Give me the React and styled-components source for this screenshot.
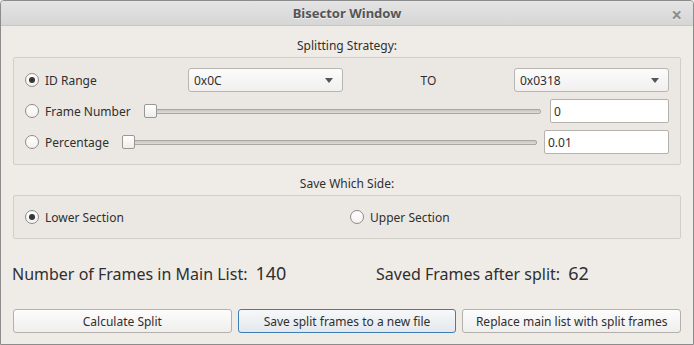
import styled, { createGlobalStyle } from "styled-components";

const Global = createGlobalStyle`
  html, body { margin: 0; padding: 0; background: #efece8; }
  body { font-family: "Noto Sans", "DejaVu Sans", sans-serif; color: #2f2f2f; }
`;

const Window = styled.div`
  width: 694px; height: 345px; box-sizing: border-box;
  border: 1px solid #8c8c8c; border-radius: 4px 4px 0 0;
  background: #efece8; overflow: hidden;
  display: flex; flex-direction: column;
`;

const TitleBar = styled.div`
  height: 24px; flex: none; position: relative;
  background: linear-gradient(#e4e4e4, #d6d6d6);
  border-bottom: 1px solid #c9c6c2;
  display: flex; align-items: center; justify-content: center;
  font-weight: bold; font-size: 13px; color: #555;
  text-shadow: 0 1px 0 rgba(255,255,255,.6);
`;

const Close = styled.span`
  position: absolute; right: 11px; top: 1px;
  font-size: 19px; font-weight: bold; color: #8e8e8e;
`;

const Content = styled.div`
  display: flex; flex-direction: column; padding: 0 11px;
`;

const Caption = styled.div`
  text-align: center; font-size: 12px; line-height: 18px;
  margin-top: ${p => p.$top}px;
`;

const Group = styled.div`
  margin: 2px 1px 0; border: 1px solid #d2cec9; border-radius: 2px;
  background: #ebe8e4;
  padding: ${p => p.$pad};
  height: ${p => p.$h}px; box-sizing: border-box;
`;

const Stack = styled(Group)`
  display: flex; flex-direction: column; gap: 7px;
`;

const Pair = styled(Group)`
  display: grid; grid-template-columns: 325px 1fr; align-items: center;
`;

const Row = styled.div`
  display: flex; align-items: center; height: 24px;
`;

const RadioWrap = styled.label`
  display: flex; align-items: center; gap: 6px; font-size: 12px;
  width: ${p => (p.$w ? p.$w + "px" : "auto")}; flex: none;
`;

const Circle = styled.span`
  width: 12px; height: 12px; border-radius: 50%;
  border: 1px solid #8f8b87; background: linear-gradient(#ffffff, #f3f2f1);
  display: flex; align-items: center; justify-content: center;
  &::after {
    content: ""; width: 6px; height: 6px; border-radius: 50%;
    background: #363636; display: ${p => (p.$on ? "block" : "none")};
  }
`;

function Radio({ on, children, w }) {
  return (
    <RadioWrap $w={w}>
      <Circle $on={on} />
      {children}
    </RadioWrap>
  );
}

const Combo = styled.div`
  width: 155px; height: 24px; box-sizing: border-box; flex: none;
  border: 1px solid #b9b5b1; border-radius: 3px;
  background: linear-gradient(#fcfcfc, #f1f0ef);
  display: flex; align-items: center; justify-content: space-between;
  padding: 0 9px 0 5px; font-size: 12px;
`;

const Arrow = styled.span`
  width: 0; height: 0;
  border-left: 4px solid transparent; border-right: 4px solid transparent;
  border-top: 5px solid #555;
`;

const To = styled.div`
  flex: 1; text-align: center; font-size: 12px;
`;

const Slider = styled.div`
  flex: 1; display: flex; align-items: center;
  margin: 0 ${p => p.$mr}px 0 ${p => p.$ml}px;
`;

const Handle = styled.div`
  width: 11px; height: 12px; flex: none; position: relative; z-index: 1;
  border: 1px solid #9a9692; border-radius: 2px;
  background: linear-gradient(#ffffff, #eeedec);
`;

const Groove = styled.div`
  flex: 1; height: 3px; margin-left: -2px;
  border: 1px solid #aaa6a2; border-radius: 2px;
  background: linear-gradient(#c9c6c2, #dedbd7);
`;

const Field = styled.div`
  width: ${p => p.$w}px; height: 24px; box-sizing: border-box; flex: none;
  border: 1px solid #b5b1ad; border-radius: 2px; background: #fff;
  display: flex; align-items: center; padding-left: 3px; font-size: 12px;
`;

const Stats = styled.div`
  display: flex; align-items: center; margin-top: 23px; height: 22px;
`;

const Stat = styled.div`
  display: flex; align-items: baseline; gap: 8px;
  width: ${p => (p.$w ? p.$w + "px" : "auto")};
  font-size: 16px;
`;

const Value = styled.span`
  font-size: 18px;
`;

const Buttons = styled.div`
  display: flex; gap: 6px; margin: 25px 1px 0;
`;

const Button = styled.div`
  flex: 1; height: 24px; box-sizing: border-box;
  border: 1px solid ${p => (p.$focus ? "#3d7fb5" : "#b4b0ac")};
  border-radius: 3px;
  background: ${p => (p.$focus ? "linear-gradient(#f6f8fa, #e4e8ec)" : "linear-gradient(#fdfdfd, #efeeed)")};
  display: flex; align-items: center; justify-content: center;
  font-size: 12px;
`;

export default function App() {
  return (
    <>
      <Global />
      <Window>
        <TitleBar>
          Bisector Window
          <Close>×</Close>
        </TitleBar>
        <Content>
          <Caption $top={11}>Splitting Strategy:</Caption>
          <Stack $pad="10px 11px 9px" $h={108}>
            <Row>
              <Radio on w={163}>ID Range</Radio>
              <Combo>0x0C<Arrow /></Combo>
              <To>TO</To>
              <Combo>0x0318<Arrow /></Combo>
            </Row>
            <Row>
              <Radio>Frame Number</Radio>
              <Slider $ml={13} $mr={9}>
                <Handle />
                <Groove />
              </Slider>
              <Field $w={119}>0</Field>
            </Row>
            <Row>
              <Radio>Percentage</Radio>
              <Slider $ml={13} $mr={7}>
                <Handle />
                <Groove />
              </Slider>
              <Field $w={125}>0.01</Field>
            </Row>
          </Stack>
          <Caption $top={10}>Save Which Side:</Caption>
          <Pair $pad="0 11px" $h={44}>
            <Radio on>Lower Section</Radio>
            <Radio>Upper Section</Radio>
          </Pair>
          <Stats>
            <Stat $w={364}>Number of Frames in Main List:<Value>140</Value></Stat>
            <Stat>Saved Frames after split:<Value>62</Value></Stat>
          </Stats>
          <Buttons>
            <Button>Calculate Split</Button>
            <Button $focus>Save split frames to a new file</Button>
            <Button>Replace main list with split frames</Button>
          </Buttons>
        </Content>
      </Window>
    </>
  );
}
